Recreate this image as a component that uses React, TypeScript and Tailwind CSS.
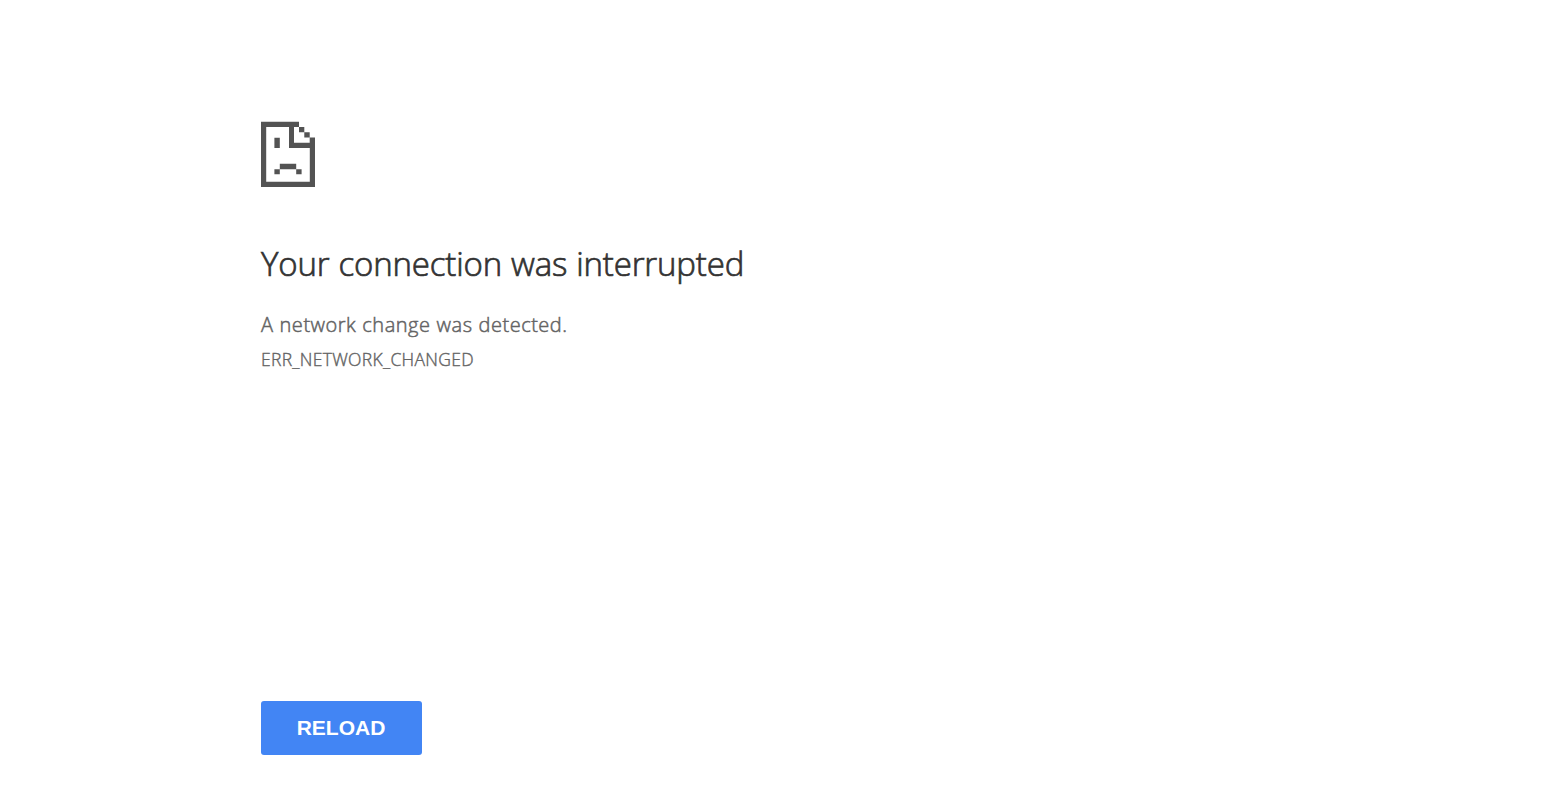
export default function App() {
  return (
    <main className="flex h-[788px] flex-col items-start bg-white pl-[261px] pt-[121px] font-['Open_Sans',sans-serif] text-[#646464]">
      <svg width="54" height="66" viewBox="0 0 54 66" fill="#535353" aria-hidden="true">
        <path fillRule="evenodd" d="M0 .8H38V6H43.3V11.2H48.7V16.6H54V66H0ZM5.2 6V60.8H48.8V27H28V6ZM33 6V21.8H48.7V16.6H43.3V11.2H38V6Z" />
        <path d="M13.4 16.7H18.8V27.1H13.4ZM18.8 42.8H35.2V48.2H18.8ZM13.4 48.2H18.8V53.2H13.4ZM35.2 48.2H40.6V53.2H35.2Z" />
      </svg>
      <h1 className="mt-[56px] h-[42px] whitespace-nowrap text-[33px] font-light leading-[42px] tracking-[-0.15px] [word-spacing:0.5px] text-[#333] [-webkit-text-stroke:0.7px_#333]">
        Your connection was interrupted
      </h1>
      <p className="mt-[25px] h-[30px] whitespace-nowrap text-[20px] font-light leading-[30px] tracking-[0.52px] [word-spacing:0.3px] [-webkit-text-stroke:0.5px_#646464]">A network change was detected.</p>
      <p className="mt-[7px] h-[24px] whitespace-nowrap text-[17.5px] font-light leading-[24px] tracking-[0.3px] [-webkit-text-stroke:0.4px_#646464]">ERR_NETWORK_CHANGED</p>
      <button className="mt-[330px] h-[54px] w-[161px] rounded-[3px] bg-[#4285f4] pr-px font-['Liberation_Sans',sans-serif] text-[21px] font-bold text-white">RELOAD</button>
    </main>
  );
}
